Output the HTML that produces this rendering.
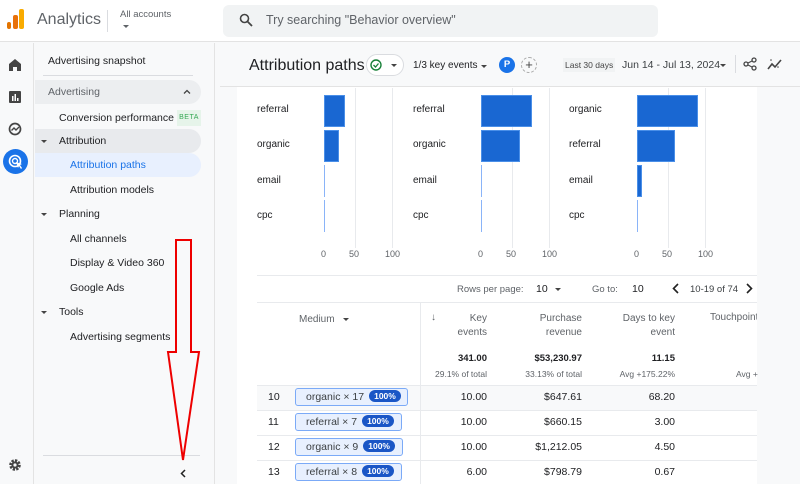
<!DOCTYPE html>
<html><head><meta charset="utf-8"><style>
*{box-sizing:border-box;margin:0;padding:0}
body{width:800px;height:484px;overflow:hidden;font-family:"Liberation Sans",Arial,sans-serif;color:#202124;background:#f8f9fa;position:relative}
.a{position:absolute;white-space:nowrap}
.s{font-size:10px}
.g{color:#5f6368}
.bar{position:absolute;background:#1967d2;height:32px;border:1px solid #4a8fe8}
.thin{position:absolute;background:#8ab4f8;width:1px;height:32px}
.grid{position:absolute;width:1px;background:#e8eaed;top:88px;height:160px}
.chip{position:absolute;height:18px;border:1px solid #7baaf7;border-radius:3px;background:#e8f0fe;font-size:10.5px;line-height:16px;padding-left:10px;color:#3c4043}
.chip b{display:inline-block;background:#1a56c6;color:#fff;font-size:8.5px;border-radius:8px;padding:0 5px;line-height:12px;margin-left:5px;vertical-align:1px}
.num{position:absolute;font-size:10.5px;text-align:right}
.tri{position:absolute;width:0;height:0;border-left:3px solid transparent;border-right:3px solid transparent;border-top:3.5px solid #444}
</style></head><body>
<!-- top bar -->
<div class="a" style="left:0;top:0;width:800px;height:42px;background:#fff;border-bottom:1px solid #e3e3e3"></div>
<div class="a" style="left:7px;top:22px;width:4px;height:7px;background:#e37400;border-radius:2px"></div>
<div class="a" style="left:13px;top:15px;width:5px;height:14px;background:#e8710a;border-radius:2px"></div>
<div class="a" style="left:19px;top:9px;width:5px;height:20px;background:#f9ab00;border-radius:2px"></div>
<div class="a" style="left:37px;top:11px;font-size:16px;color:#5f6368">Analytics</div>
<div class="a" style="left:107px;top:10px;width:1px;height:22px;background:#dadce0"></div>
<div class="a" style="left:120px;top:9px;font-size:9.5px;color:#5f6368">All accounts</div>
<div class="tri" style="left:123px;top:25px;border-top-color:#5f6368"></div>
<div class="a" style="left:223px;top:5px;width:435px;height:32px;background:#f1f3f4;border-radius:6px"></div>
<svg class="a" style="left:239px;top:13px" width="14" height="14" viewBox="0 0 14 14"><circle cx="5.5" cy="5.5" r="4" fill="none" stroke="#444" stroke-width="1.6"/><path d="M8.5 8.5L13 13" stroke="#444" stroke-width="1.8"/></svg>
<div class="a" style="left:266px;top:13px;font-size:12.5px;color:#5f6368">Try searching "Behavior overview"</div>
<!-- left rail -->
<div class="a" style="left:0;top:43px;width:34px;height:441px;background:#f8f9fa;border-right:1px solid #e3e3e3"></div>
<svg class="a" style="left:8px;top:58px" width="14" height="14" viewBox="0 0 14 14"><path d="M1 6L7 1l6 5v7H9V9H5v4H1z" fill="#444"/></svg>
<svg class="a" style="left:9px;top:91px" width="12" height="12"><rect width="12" height="12" rx="1" fill="#444"/><rect x="3" y="5" width="1.5" height="5" fill="#fff"/><rect x="5.5" y="3" width="1.5" height="7" fill="#fff"/><rect x="8" y="7" width="1.5" height="3" fill="#fff"/></svg>
<svg class="a" style="left:8px;top:122px" width="14" height="14"><circle cx="7" cy="7" r="5.5" fill="none" stroke="#444" stroke-width="1.7"/><path d="M3.5 8.5L6 6l2 2 3-3" fill="none" stroke="#444" stroke-width="1.4"/></svg>
<div class="a" style="left:3px;top:149px;width:25px;height:25px;border-radius:50%;background:#1a73e8"></div>
<svg class="a" style="left:7px;top:153px" width="17" height="17"><circle cx="8" cy="8" r="5.5" fill="none" stroke="#fff" stroke-width="1.6"/><circle cx="8" cy="8" r="2.5" fill="none" stroke="#fff" stroke-width="1.4"/><path d="M9 9l6 2-2 1 2 3-1 1-2-3-1 2z" fill="#fff"/></svg>
<svg class="a" style="left:8px;top:458px" width="14" height="14" viewBox="0 0 14 14"><circle cx="7" cy="7" r="4.5" fill="none" stroke="#444" stroke-width="2.6" stroke-dasharray="2.3 1.2"/><circle cx="7" cy="7" r="3.6" fill="#444"/><circle cx="7" cy="7" r="1.6" fill="#f8f9fa"/></svg>
<!-- sidebar -->
<div class="a" style="left:35px;top:43px;width:180px;height:441px;background:#f8f9fa;border-right:1px solid #e3e3e3"></div>
<div class="a" style="left:48px;top:55px;font-size:10.5px">Advertising snapshot</div>
<div class="a" style="left:43px;top:75px;width:150px;height:1px;background:#dadce0"></div>
<div class="a" style="left:35px;top:80px;width:166px;height:24px;background:#eceef0;border-radius:0 12px 12px 0"></div>
<div class="a" style="left:48px;top:86px;font-size:10.5px;color:#5f6368">Advertising</div>
<svg class="a" style="left:183px;top:89px" width="8" height="5"><path d="M1 4.5L4 1.5 7 4.5" fill="none" stroke="#444" stroke-width="1.3"/></svg>
<div class="a" style="left:59px;top:112px;font-size:10.5px">Conversion performance</div>
<div class="a" style="left:177px;top:110px;width:24px;height:16px;background:#e6f4ea;color:#34a853;font-size:7px;line-height:16px;text-align:center;letter-spacing:.5px">BETA</div>
<div class="a" style="left:35px;top:129px;width:166px;height:24px;background:#e8eaed;border-radius:0 12px 12px 0"></div>
<div class="tri" style="left:41px;top:140px"></div>
<div class="a" style="left:59px;top:135px;font-size:10.5px">Attribution</div>
<div class="a" style="left:35px;top:153px;width:166px;height:24px;background:#e8f0fe;border-radius:0 12px 12px 0"></div>
<div class="a" style="left:70px;top:159px;font-size:10.5px;color:#1a73e8">Attribution paths</div>
<div class="a" style="left:70px;top:184px;font-size:10.5px">Attribution models</div>
<div class="tri" style="left:41px;top:213px"></div>
<div class="a" style="left:59px;top:208px;font-size:10.5px">Planning</div>
<div class="a" style="left:70px;top:233px;font-size:10.5px">All channels</div>
<div class="a" style="left:70px;top:257px;font-size:10.5px">Display &amp; Video 360</div>
<div class="a" style="left:70px;top:282px;font-size:10.5px">Google Ads</div>
<div class="tri" style="left:41px;top:311px"></div>
<div class="a" style="left:59px;top:306px;font-size:10.5px">Tools</div>
<div class="a" style="left:70px;top:331px;font-size:10.5px">Advertising segments</div>
<div class="a" style="left:43px;top:455px;width:157px;height:1px;background:#dadce0"></div>
<svg class="a" style="left:180px;top:469px" width="6" height="9"><path d="M5 1L1.5 4.5 5 8" fill="none" stroke="#222" stroke-width="1.5"/></svg>
<!-- header -->
<div class="a" style="left:249px;top:57px;font-size:16px">Attribution paths</div>
<div class="a" style="left:366px;top:54px;width:38px;height:22px;border:1px solid #dadce0;border-radius:11px;background:#fff"></div>
<svg class="a" style="left:370px;top:59px" width="12" height="12"><circle cx="6" cy="6" r="5" fill="none" stroke="#188038" stroke-width="1.4"/><path d="M3.5 6l2 2 3-3.5" fill="none" stroke="#188038" stroke-width="1.3"/></svg>
<div class="tri" style="left:391px;top:64px"></div>
<div class="a" style="left:413px;top:60px;font-size:10px">1/3 key events</div>
<div class="tri" style="left:481px;top:65px"></div>
<div class="a" style="left:499px;top:57px;width:16px;height:16px;border-radius:50%;background:#1a73e8;color:#fff;font-size:9.5px;font-weight:bold;text-align:center;line-height:16px">P</div>
<div class="a" style="left:521px;top:57px;width:16px;height:16px;border-radius:50%;border:1px dashed #aaa;text-align:center;line-height:14px;font-size:13px;color:#444">+</div>
<div class="a" style="left:563px;top:58px;height:14px;background:#f1f3f4;font-size:8.5px;line-height:14px;padding:0 2px;color:#444">Last 30 days</div>
<div class="a" style="left:622px;top:59px;font-size:10.5px;color:#3c4043">Jun 14 - Jul 13, 2024</div>
<div class="tri" style="left:720px;top:64px"></div>
<div class="a" style="left:735px;top:55px;width:1px;height:18px;background:#dadce0"></div>
<svg class="a" style="left:743px;top:57px" width="14" height="14"><circle cx="11" cy="3" r="2" fill="none" stroke="#444" stroke-width="1.3"/><circle cx="3" cy="7" r="2" fill="none" stroke="#444" stroke-width="1.3"/><circle cx="11" cy="11" r="2" fill="none" stroke="#444" stroke-width="1.3"/><path d="M5 6l4-2M5 8l4 2" stroke="#444" stroke-width="1.2"/></svg>
<svg class="a" style="left:767px;top:57px" width="16" height="14"><path d="M1 12l4-5 3 3 6-7" fill="none" stroke="#444" stroke-width="1.6"/><circle cx="4" cy="3" r=".8" fill="#444"/><circle cx="11" cy="10" r=".8" fill="#444"/></svg>
<div class="a" style="left:220px;top:86px;width:580px;height:1px;background:#e3e3e3"></div>
<!-- card -->
<div class="a" style="left:237px;top:87px;width:520px;height:397px;background:#fff"></div>
<!-- charts -->
<div class="grid" style="left:355px"></div><div class="grid" style="left:392px"></div>
<div class="grid" style="left:512px"></div><div class="grid" style="left:549px"></div>
<div class="grid" style="left:668px"></div><div class="grid" style="left:705px"></div>
<div class="a s" style="left:257px;top:104px">referral</div><div class="a s" style="left:257px;top:139px">organic</div><div class="a s" style="left:257px;top:175px">email</div><div class="a s" style="left:257px;top:210px">cpc</div>
<div class="a s" style="left:413px;top:104px">referral</div><div class="a s" style="left:413px;top:139px">organic</div><div class="a s" style="left:413px;top:175px">email</div><div class="a s" style="left:413px;top:210px">cpc</div>
<div class="a s" style="left:569px;top:104px">organic</div><div class="a s" style="left:569px;top:139px">referral</div><div class="a s" style="left:569px;top:175px">email</div><div class="a s" style="left:569px;top:210px">cpc</div>
<div class="bar" style="left:324px;top:95px;width:21px"></div><div class="bar" style="left:324px;top:130px;width:15px"></div>
<div class="thin" style="left:324px;top:165px"></div><div class="thin" style="left:324px;top:200px"></div>
<div class="bar" style="left:481px;top:95px;width:51px"></div><div class="bar" style="left:481px;top:130px;width:39px"></div>
<div class="thin" style="left:481px;top:165px"></div><div class="thin" style="left:481px;top:200px"></div>
<div class="bar" style="left:637px;top:95px;width:61px"></div><div class="bar" style="left:637px;top:130px;width:38px"></div>
<div class="bar" style="left:637px;top:165px;width:5px"></div><div class="thin" style="left:637px;top:200px"></div>
<div class="a g" style="left:321px;top:249px;font-size:9px">0</div><div class="a g" style="left:349px;top:249px;font-size:9px">50</div><div class="a g" style="left:385px;top:249px;font-size:9px">100</div>
<div class="a g" style="left:478px;top:249px;font-size:9px">0</div><div class="a g" style="left:506px;top:249px;font-size:9px">50</div><div class="a g" style="left:542px;top:249px;font-size:9px">100</div>
<div class="a g" style="left:634px;top:249px;font-size:9px">0</div><div class="a g" style="left:662px;top:249px;font-size:9px">50</div><div class="a g" style="left:698px;top:249px;font-size:9px">100</div>
<!-- table -->
<div class="a" style="left:257px;top:275px;width:500px;height:1px;background:#e8eaed"></div>
<div class="a g" style="left:457px;top:284px;font-size:9.5px">Rows per page:</div>
<div class="a" style="left:536px;top:283px;font-size:10.5px">10</div>
<div class="tri" style="left:555px;top:288px"></div>
<div class="a g" style="left:592px;top:284px;font-size:9.5px">Go to:</div>
<div class="a" style="left:632px;top:283px;font-size:10.5px">10</div>
<svg class="a" style="left:672px;top:283px" width="7" height="11"><path d="M6 1L1.5 5.5 6 10" fill="none" stroke="#222" stroke-width="1.6"/></svg>
<div class="a" style="left:690px;top:284px;font-size:9.5px;color:#3c4043">10-19 of 74</div>
<svg class="a" style="left:746px;top:283px" width="7" height="11"><path d="M1 1l4.5 4.5L1 10" fill="none" stroke="#222" stroke-width="1.6"/></svg>
<div class="a" style="left:257px;top:302px;width:500px;height:1px;background:#e8eaed"></div>
<div class="a" style="left:420px;top:302px;width:1px;height:182px;background:#e8eaed"></div>
<div class="a g" style="left:299px;top:314px;font-size:10px">Medium</div>
<div class="tri" style="left:343px;top:318px"></div>
<div class="a g" style="left:431px;top:312px;font-size:10px">↓</div>
<div class="num g" style="left:420px;top:312px;width:67px;line-height:14px;font-size:10px">Key<br>events</div>
<div class="num g" style="left:500px;top:312px;width:82px;line-height:14px;font-size:10px">Purchase<br>revenue</div>
<div class="num g" style="left:590px;top:312px;width:85px;line-height:14px;font-size:10px">Days to key<br>event</div>
<div class="a g" style="left:710px;top:312px;font-size:10px">Touchpoints</div>
<div class="a" style="left:757px;top:302px;width:43px;height:182px;background:#f8f9fa"></div>
<div class="num" style="left:420px;top:353px;width:67px;font-weight:bold;font-size:9.5px">341.00</div>
<div class="num" style="left:500px;top:353px;width:82px;font-weight:bold;font-size:9.5px">$53,230.97</div>
<div class="num" style="left:590px;top:353px;width:85px;font-weight:bold;font-size:9.5px">11.15</div>
<div class="num g" style="left:420px;top:369px;width:67px;font-size:8.5px">29.1% of total</div>
<div class="num g" style="left:500px;top:369px;width:82px;font-size:8.5px">33.13% of total</div>
<div class="num g" style="left:590px;top:369px;width:85px;font-size:8.5px">Avg +175.22%</div>
<div class="a g" style="left:736px;top:369px;font-size:8.5px">Avg +</div>
<div class="a" style="left:257px;top:385px;width:500px;height:25px;background:#f8f9fa;border-top:1px solid #e8eaed"></div>
<div class="a" style="left:257px;top:410px;width:500px;height:1px;background:#e8eaed"></div>
<div class="a" style="left:257px;top:435px;width:500px;height:1px;background:#e8eaed"></div>
<div class="a" style="left:257px;top:460px;width:500px;height:1px;background:#e8eaed"></div>
<div class="a" style="left:420px;top:385px;width:1px;height:99px;background:#e8eaed"></div>
<div class="a" style="left:268px;top:391px;font-size:10.5px">10</div>
<div class="a" style="left:268px;top:416px;font-size:10.5px">11</div>
<div class="a" style="left:268px;top:441px;font-size:10.5px">12</div>
<div class="a" style="left:268px;top:466px;font-size:10.5px">13</div>
<div class="chip" style="left:295px;top:388px;width:113px">organic × 17<b>100%</b></div>
<div class="chip" style="left:295px;top:413px;width:107px">referral × 7<b>100%</b></div>
<div class="chip" style="left:295px;top:438px;width:108px">organic × 9<b>100%</b></div>
<div class="chip" style="left:295px;top:463px;width:107px">referral × 8<b>100%</b></div>
<div class="num" style="left:420px;top:391px;width:67px">10.00</div><div class="num" style="left:500px;top:391px;width:82px">$647.61</div><div class="num" style="left:590px;top:391px;width:85px">68.20</div>
<div class="num" style="left:420px;top:416px;width:67px">10.00</div><div class="num" style="left:500px;top:416px;width:82px">$660.15</div><div class="num" style="left:590px;top:416px;width:85px">3.00</div>
<div class="num" style="left:420px;top:441px;width:67px">10.00</div><div class="num" style="left:500px;top:441px;width:82px">$1,212.05</div><div class="num" style="left:590px;top:441px;width:85px">4.50</div>
<div class="num" style="left:420px;top:466px;width:67px">6.00</div><div class="num" style="left:500px;top:466px;width:82px">$798.79</div><div class="num" style="left:590px;top:466px;width:85px">0.67</div>
<!-- red arrow -->
<svg class="a" style="left:0;top:0" width="800" height="484"><path d="M176 240H191V352H199L183 460L168 352H176Z" fill="none" stroke="#e00" stroke-width="2"/></svg>
</body></html>
